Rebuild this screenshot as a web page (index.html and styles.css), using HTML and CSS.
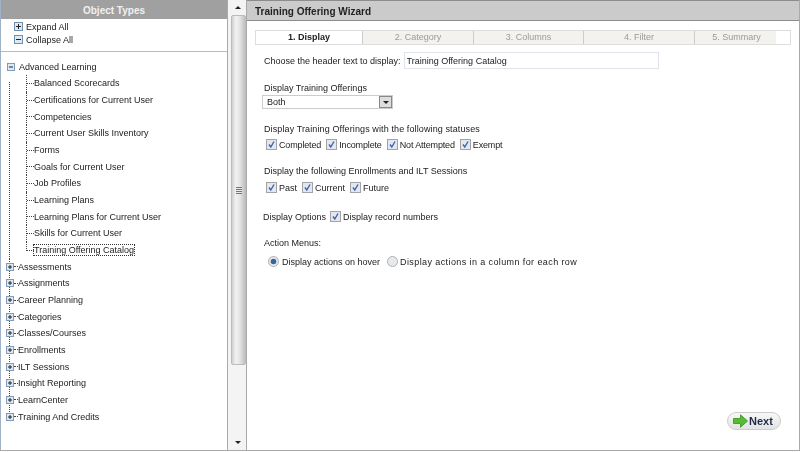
FILE: index.html
```html
<!DOCTYPE html>
<html lang="en">

<head>
  <meta charset="UTF-8">
  <title>Training Offering Wizard</title>
  <link rel="stylesheet" href="styles.css">
</head>

<body>
  <div class="page">

    <div class="side">
      <div class="side-title">Object Types</div>
      <div class="all-links">
        <div class="all-row">
          <svg class="box" width="9" height="9" viewBox="0 0 9 9"><rect x="0.5" y="0.5" width="8" height="8" fill="#dfe9f3" stroke="#6f90b0"/><path d="M2 4.5H7M4.5 2V7" stroke="#222"/></svg>
          Expand All
        </div>
        <div class="all-row">
          <svg class="box" width="9" height="9" viewBox="0 0 9 9"><rect x="0.5" y="0.5" width="8" height="8" fill="#dfe9f3" stroke="#6f90b0"/><path d="M2 4.5H7" stroke="#222"/></svg>
          Collapse All
        </div>
      </div>

      <div class="tree">
        <div class="node top">
          <svg class="tog" width="8" height="8" viewBox="0 0 8 8"><rect x="0.5" y="0.5" width="7" height="7" fill="#dfe9f3" stroke="#7f9db9"/><path d="M2 4H6" stroke="#222"/></svg>
          <span class="open-label">Advanced Learning</span>
        </div>
        <div class="kids">
          <div class="kid"><i class="dash"></i>Balanced Scorecards</div>
          <div class="kid"><i class="dash"></i>Certifications for Current User</div>
          <div class="kid"><i class="dash"></i>Competencies</div>
          <div class="kid"><i class="dash"></i>Current User Skills Inventory</div>
          <div class="kid"><i class="dash"></i>Forms</div>
          <div class="kid"><i class="dash"></i>Goals for Current User</div>
          <div class="kid"><i class="dash"></i>Job Profiles</div>
          <div class="kid"><i class="dash"></i>Learning Plans</div>
          <div class="kid"><i class="dash"></i>Learning Plans for Current User</div>
          <div class="kid"><i class="dash"></i>Skills for Current User</div>
          <div class="kid last"><i class="dash"></i><span class="selected">Training Offering Catalog</span></div>
        </div>
        <div class="closed-list">
          <div class="node"><svg class="tog" width="8" height="8" viewBox="0 0 8 8"><rect x="0.5" y="0.5" width="7" height="7" fill="#dfe9f3" stroke="#7f9db9"/><path d="M2 4H6M4 2V6" stroke="#222"/></svg><i class="dash short"></i>Assessments</div>
          <div class="node"><svg class="tog" width="8" height="8" viewBox="0 0 8 8"><rect x="0.5" y="0.5" width="7" height="7" fill="#dfe9f3" stroke="#7f9db9"/><path d="M2 4H6M4 2V6" stroke="#222"/></svg><i class="dash short"></i>Assignments</div>
          <div class="node"><svg class="tog" width="8" height="8" viewBox="0 0 8 8"><rect x="0.5" y="0.5" width="7" height="7" fill="#dfe9f3" stroke="#7f9db9"/><path d="M2 4H6M4 2V6" stroke="#222"/></svg><i class="dash short"></i>Career Planning</div>
          <div class="node"><svg class="tog" width="8" height="8" viewBox="0 0 8 8"><rect x="0.5" y="0.5" width="7" height="7" fill="#dfe9f3" stroke="#7f9db9"/><path d="M2 4H6M4 2V6" stroke="#222"/></svg><i class="dash short"></i>Categories</div>
          <div class="node"><svg class="tog" width="8" height="8" viewBox="0 0 8 8"><rect x="0.5" y="0.5" width="7" height="7" fill="#dfe9f3" stroke="#7f9db9"/><path d="M2 4H6M4 2V6" stroke="#222"/></svg><i class="dash short"></i>Classes/Courses</div>
          <div class="node"><svg class="tog" width="8" height="8" viewBox="0 0 8 8"><rect x="0.5" y="0.5" width="7" height="7" fill="#dfe9f3" stroke="#7f9db9"/><path d="M2 4H6M4 2V6" stroke="#222"/></svg><i class="dash short"></i>Enrollments</div>
          <div class="node"><svg class="tog" width="8" height="8" viewBox="0 0 8 8"><rect x="0.5" y="0.5" width="7" height="7" fill="#dfe9f3" stroke="#7f9db9"/><path d="M2 4H6M4 2V6" stroke="#222"/></svg><i class="dash short"></i>ILT Sessions</div>
          <div class="node"><svg class="tog" width="8" height="8" viewBox="0 0 8 8"><rect x="0.5" y="0.5" width="7" height="7" fill="#dfe9f3" stroke="#7f9db9"/><path d="M2 4H6M4 2V6" stroke="#222"/></svg><i class="dash short"></i>Insight Reporting</div>
          <div class="node"><svg class="tog" width="8" height="8" viewBox="0 0 8 8"><rect x="0.5" y="0.5" width="7" height="7" fill="#dfe9f3" stroke="#7f9db9"/><path d="M2 4H6M4 2V6" stroke="#222"/></svg><i class="dash short"></i>LearnCenter</div>
          <div class="node"><svg class="tog" width="8" height="8" viewBox="0 0 8 8"><rect x="0.5" y="0.5" width="7" height="7" fill="#dfe9f3" stroke="#7f9db9"/><path d="M2 4H6M4 2V6" stroke="#222"/></svg><i class="dash short"></i>Training And Credits</div>
        </div>
      </div>
    </div>

    <div class="scrollbar">
      <div class="arrow up"></div>
      <div class="thumb"><div class="grip"></div></div>
      <div class="track"></div>
      <div class="arrow down"></div>
    </div>

    <div class="main">
      <div class="main-title">Training Offering Wizard</div>

      <div class="tabs">
        <div class="tab on">1. Display</div>
        <div class="tab t2">2. Category</div>
        <div class="tab t3">3. Columns</div>
        <div class="tab t4">4. Filter</div>
        <div class="tab t5">5. Summary</div>
      </div>

      <div class="form">
        <div class="header-row">
          <label class="header-label">Choose the header text to display:</label>
          <input class="text-in" type="text" value="Training Offering Catalog">
        </div>

        <div class="group g-offer">
          <div>Display Training Offerings</div>
          <div class="select">
            <span>Both</span>
            <span class="select-btn"></span>
          </div>
        </div>

        <div class="group g-status">
          <div class="status-title">Display Training Offerings with the following statuses</div>
          <div class="checks">
            <span class="chk"><svg class="cb" width="11" height="11" viewBox="0 0 11 11"><rect x="0.5" y="0.5" width="10" height="10" fill="#e3e8f0" stroke="#a3a3a3"/><path d="M3 5.5L4.8 8L8 2.5" fill="none" stroke="#3f63ad" stroke-width="1.4"/></svg>Completed</span>
            <span class="chk"><svg class="cb" width="11" height="11" viewBox="0 0 11 11"><rect x="0.5" y="0.5" width="10" height="10" fill="#e3e8f0" stroke="#a3a3a3"/><path d="M3 5.5L4.8 8L8 2.5" fill="none" stroke="#3f63ad" stroke-width="1.4"/></svg>Incomplete</span>
            <span class="chk"><svg class="cb" width="11" height="11" viewBox="0 0 11 11"><rect x="0.5" y="0.5" width="10" height="10" fill="#e3e8f0" stroke="#a3a3a3"/><path d="M3 5.5L4.8 8L8 2.5" fill="none" stroke="#3f63ad" stroke-width="1.4"/></svg>Not Attempted</span>
            <span class="chk"><svg class="cb" width="11" height="11" viewBox="0 0 11 11"><rect x="0.5" y="0.5" width="10" height="10" fill="#e3e8f0" stroke="#a3a3a3"/><path d="M3 5.5L4.8 8L8 2.5" fill="none" stroke="#3f63ad" stroke-width="1.4"/></svg>Exempt</span>
          </div>
        </div>

        <div class="group g-enroll">
          <div>Display the following Enrollments and ILT Sessions</div>
          <div class="checks">
            <span class="chk"><svg class="cb" width="11" height="11" viewBox="0 0 11 11"><rect x="0.5" y="0.5" width="10" height="10" fill="#e3e8f0" stroke="#a3a3a3"/><path d="M3 5.5L4.8 8L8 2.5" fill="none" stroke="#3f63ad" stroke-width="1.4"/></svg>Past</span>
            <span class="chk"><svg class="cb" width="11" height="11" viewBox="0 0 11 11"><rect x="0.5" y="0.5" width="10" height="10" fill="#e3e8f0" stroke="#a3a3a3"/><path d="M3 5.5L4.8 8L8 2.5" fill="none" stroke="#3f63ad" stroke-width="1.4"/></svg>Current</span>
            <span class="chk"><svg class="cb" width="11" height="11" viewBox="0 0 11 11"><rect x="0.5" y="0.5" width="10" height="10" fill="#e3e8f0" stroke="#a3a3a3"/><path d="M3 5.5L4.8 8L8 2.5" fill="none" stroke="#3f63ad" stroke-width="1.4"/></svg>Future</span>
          </div>
        </div>

        <div class="options">
          <span class="options-label">Display Options</span>
          <span class="chk"><svg class="cb" width="11" height="11" viewBox="0 0 11 11"><rect x="0.5" y="0.5" width="10" height="10" fill="#e3e8f0" stroke="#a3a3a3"/><path d="M3 5.5L4.8 8L8 2.5" fill="none" stroke="#3f63ad" stroke-width="1.4"/></svg>Display record numbers</span>
        </div>

        <div class="group g-action">
          <div>Action Menus:</div>
          <div class="radios">
            <span class="rad"><svg class="rb" width="11" height="11" viewBox="0 0 11 11"><circle cx="5.5" cy="5.5" r="5" fill="#e6e9ee" stroke="#b0b0b0"/><circle cx="5.5" cy="5.5" r="2.8" fill="#34689f"/></svg>Display actions on hover</span>
            <span class="rad wide"><svg class="rb" width="11" height="11" viewBox="0 0 11 11"><circle cx="5.5" cy="5.5" r="5" fill="#e6e9ee" stroke="#b0b0b0"/></svg>Display actions in a column for each row</span>
          </div>
        </div>
      </div>

      <div class="foot">
        <div class="next">
          <svg width="15" height="14" viewBox="0 0 15 14"><path d="M0.5 4.5H7.5V0.8L14.5 7L7.5 13.2V9.5H0.5Z" fill="#55bb33" stroke="#4a9e30"/></svg>
          <span>Next</span>
        </div>
      </div>
    </div>

  </div>
</body>

</html>
```

FILE: styles.css
```css
html,
body {
  margin: 0;
  padding: 0;
  height: 452px;
  overflow: hidden;
  background-color: white;
  font-family: "Liberation Sans", Arial, sans-serif;
  font-size: 9px;
  color: #222;
}

.page {
  display: flex;
  height: 451px;
  border-bottom: 1px solid #a8a8a8;
  box-sizing: border-box;
  filter: blur(0.3px);
}

/* left side */
.side {
  width: 228px;
  box-sizing: border-box;
  border-left: 1px solid #9fb2c6;
  border-right: 1px solid #aaa;
  flex-shrink: 0;
}

.side-title {
  height: 19px;
  line-height: 21px;
  background-color: #a0a0a0;
  color: #f0f0f0;
  font-size: 10px;
  font-weight: bold;
  text-align: center;
}

.all-links {
  height: 33px;
  box-sizing: border-box;
  padding-left: 13px;
  padding-top: 1px;
  border-bottom: 1px solid #bbb;
}

.all-row {
  display: flex;
  align-items: center;
  gap: 3px;
  height: 13px;
}

.box {
  flex-shrink: 0;
}

.tree {
  padding-top: 6.5px;
}

.node {
  display: flex;
  align-items: center;
  height: 16.67px;
  padding-left: 6px;
}

.tog {
  flex-shrink: 0;
}

.open-label {
  margin-left: 4px;
}

.kids {
  margin-left: 8px;
  padding-left: 17px;
  background: repeating-linear-gradient(to bottom, #444 0, #444 1px, transparent 1px, transparent 2px) 0 7px / 1px 100% no-repeat;
}

.kid {
  display: flex;
  align-items: center;
  height: 16.67px;
  border-left: 1px dotted #444;
}

.kid.last {
  border-left: 0;
}

.dash {
  display: inline-block;
  width: 7px;
  border-bottom: 1px dotted #444;
  flex-shrink: 0;
}

.dash.short {
  width: 4px;
}

.kid.last .dash {
  align-self: flex-start;
  width: 7px;
  height: 8px;
  border-left: 1px dotted #444;
}

.selected {
  border: 1px dotted #333;
  margin-left: -1px;
  line-height: 10px;
}

.closed-list {
  margin-left: 8px;
  border-left: 1px dotted #444;
  height: 158px;
}

.closed-list .node {
  padding-left: 0;
  margin-left: -4px;
}

/* splitter scrollbar */
.scrollbar {
  width: 18px;
  flex-shrink: 0;
  display: flex;
  flex-direction: column;
  background-color: #f4f4f4;
  box-sizing: border-box;
  padding-left: 3px;
}

.arrow {
  height: 15px;
  position: relative;
  flex-shrink: 0;
}

.arrow.up::after,
.arrow.down::after {
  content: "";
  position: absolute;
  left: 4px;
  top: 6px;
  border-left: 3px solid transparent;
  border-right: 3px solid transparent;
}

.arrow.up::after {
  border-bottom: 3px solid #222;
}

.arrow.down::after {
  border-top: 3px solid #222;
}

.thumb {
  height: 350px;
  background: linear-gradient(to right, #d0d0d0, #f2f2f2 30%, #e4e4e4 60%, #c0c0c0);
  border: 1px solid #bbb;
  border-radius: 2px;
  box-sizing: border-box;
  display: flex;
  align-items: center;
  justify-content: center;
}

.grip {
  width: 6px;
  height: 7px;
  background: repeating-linear-gradient(to bottom, #777 0, #777 1px, #e8e8e8 1px, #e8e8e8 2px);
}

.track {
  flex: 1;
}

/* right side */
.main {
  flex: 1;
  display: flex;
  flex-direction: column;
  border-left: 1px solid #aaa;
  border-right: 1px solid #aaa;
}

.main-title {
  height: 19px;
  line-height: 21px;
  padding-left: 8px;
  background-color: #cbcbcb;
  border-top: 1px solid #8c8c8c;
  border-bottom: 1px solid #8c8c8c;
  font-size: 10px;
  font-weight: bold;
}

.tabs {
  display: flex;
  height: 13px;
  margin: 9px 0 0 8px;
  border: 1px solid #ddd;
  width: 534px;
  line-height: 13px;
  text-align: center;
  color: #9a9a9a;
  background: linear-gradient(to right, #f3f2ee 97.4%, white 97.4%);
}

.tab {
  border-right: 1px solid #ccc;
  box-sizing: border-box;
}

.tab.on {
  width: 107px;
  background-color: white;
  color: #222;
  font-weight: bold;
}

.t2 {
  width: 111px;
}

.t3 {
  width: 110px;
}

.t4 {
  width: 111px;
}

.t5 {
  width: 83px;
  border-right: 0;
}

.form {
  padding: 7px 0 0 17px;
  flex: 1;
}

.header-row {
  display: flex;
  align-items: center;
  gap: 3px;
}

.text-in {
  width: 255px;
  height: 17px;
  box-sizing: border-box;
  border: 1px solid #dfe3ea;
  padding: 0 2px;
  font: inherit;
  color: #222;
}

.group > div:first-child {
  height: 11px;
  line-height: 13px;
}

.g-offer {
  margin-top: 13px;
}

.select {
  margin: 2px 0 0 -2px;
  width: 131px;
  height: 14px;
  box-sizing: border-box;
  border: 1px solid #ccc;
  display: flex;
  justify-content: space-between;
  align-items: center;
  padding-left: 4px;
}

.select-btn {
  width: 13px;
  height: 12px;
  background-color: #dedede;
  border: 1px solid #888;
  box-sizing: border-box;
  position: relative;
}

.select-btn::after {
  content: "";
  position: absolute;
  left: 3px;
  top: 4px;
  border-left: 3px solid transparent;
  border-right: 3px solid transparent;
  border-top: 3px solid #222;
}

.g-status {
  margin-top: 14px;
}

.status-title {
  letter-spacing: 0.11px;
}

.g-status .checks {
  letter-spacing: -0.15px;
}

.g-enroll {
  margin-top: 14px;
}

.checks {
  display: flex;
  gap: 5px;
  margin-top: 4px;
  padding-left: 2px;
  height: 13px;
}

.g-enroll .checks {
  margin-top: 5px;
}

.chk {
  display: inline-flex;
  align-items: center;
  gap: 2px;
}

.cb {
  flex-shrink: 0;
}

.options {
  display: flex;
  align-items: center;
  gap: 4px;
  margin-top: 16px;
  height: 13px;
}

.options-label {
  margin-left: -1px;
}

.g-action {
  margin-top: 14px;
}

.radios {
  display: flex;
  gap: 7px;
  margin-top: 7px;
  padding-left: 4px;
  height: 13px;
}

.rad {
  display: inline-flex;
  align-items: center;
  gap: 3px;
}

.rad.wide {
  gap: 2px;
  letter-spacing: 0.4px;
}

.rb {
  flex-shrink: 0;
}

.foot {
  display: flex;
  justify-content: flex-end;
  padding: 0 18px 20px 0;
}

.next {
  display: flex;
  align-items: center;
  gap: 1px;
  width: 54px;
  height: 18px;
  box-sizing: border-box;
  padding-left: 5px;
  border: 1px solid #ccc;
  border-radius: 9px;
  background: linear-gradient(to bottom, #f8f8f8, #e2e2e2);
  font-size: 11px;
  font-weight: bold;
  color: #1e2a4a;
}
```
